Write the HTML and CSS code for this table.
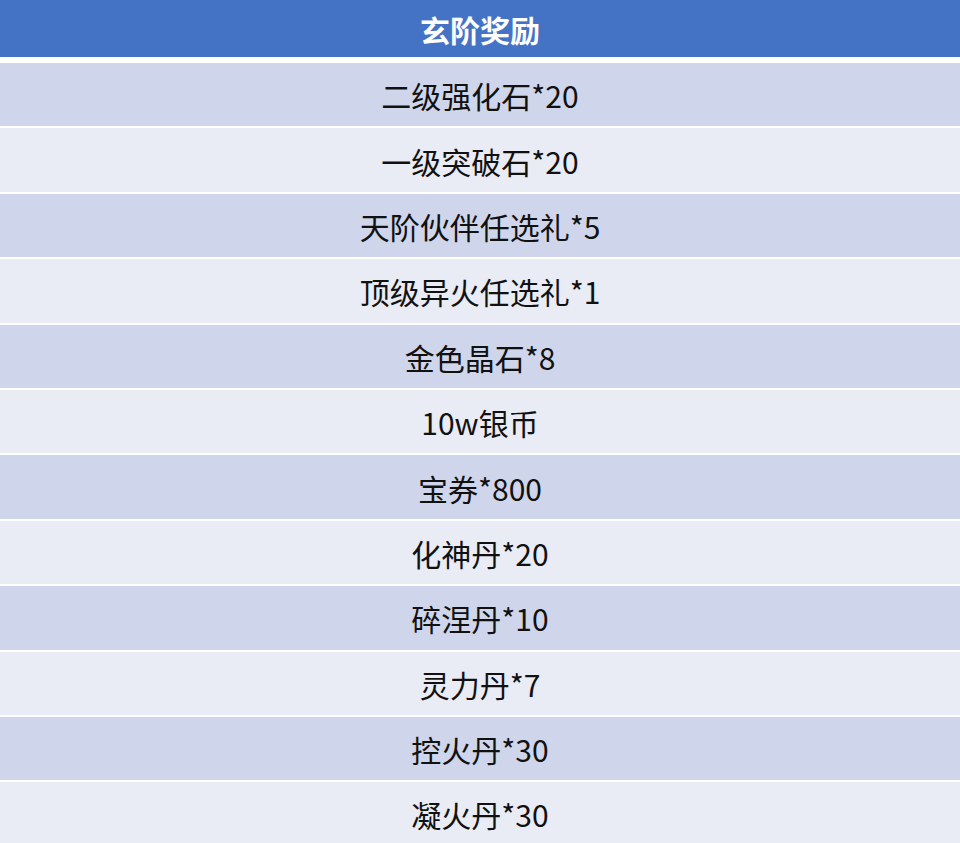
FILE: index.html
```html
<!DOCTYPE html>
<html lang="zh">
<head>
<meta charset="utf-8">
<link rel="stylesheet" href="styles.css">
</head>
<body>
<div class="table">
  <div class="head">玄阶奖励</div>
  <div class="rows">
    <div class="row odd">二级强化石*20</div>
    <div class="row even">一级突破石*20</div>
    <div class="row odd">天阶伙伴任选礼*5</div>
    <div class="row even">顶级异火任选礼*1</div>
    <div class="row odd">金色晶石*8</div>
    <div class="row even">10w银币</div>
    <div class="row odd">宝券*800</div>
    <div class="row even">化神丹*20</div>
    <div class="row odd">碎涅丹*10</div>
    <div class="row even">灵力丹*7</div>
    <div class="row odd">控火丹*30</div>
    <div class="row even">凝火丹*30</div>
  </div>
</div>
</body>
</html>
```
FILE: styles.css
```css
html, body {
  margin: 0;
  padding: 0;
  background: #ffffff;
}
body {
  width: 960px;
  height: 843px;
  overflow: hidden;
  font-family: "Noto Sans CJK SC", "Noto Sans", sans-serif;
}
.table {
  display: flex;
  flex-direction: column;
}
.head {
  height: 57px;
  background: #4472c4;
  color: #ffffff;
  font-weight: bold;
  font-size: 30px;
  display: flex;
  align-items: center;
  justify-content: center;
  margin-bottom: 6px;
}
.rows {
  display: flex;
  flex-direction: column;
  gap: 2px;
}
.row {
  height: 63.4px;
  display: flex;
  align-items: center;
  justify-content: center;
  font-size: 30px;
  color: #111111;
  padding-top: 1px;
  box-sizing: border-box;
}
.odd { background: #cfd5ea; }
.even { background: #e9ebf5; }
```
